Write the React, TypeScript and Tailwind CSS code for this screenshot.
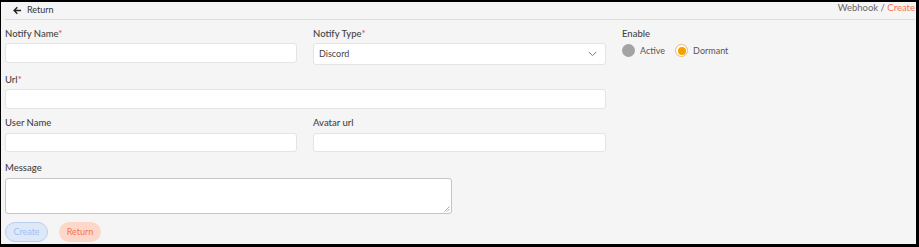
import React from "react";

const Label = ({ text, req }: { text: string; req?: boolean }) => (
  <div className="h-[12px] leading-[12px] text-[9.5px] text-[#444] font-medium">
    {text}
    {req && <span className="text-[#e8404a]">*</span>}
  </div>
);

const Input = ({ w, h = "h-[20px]" }: { w: string; h?: string }) => (
  <div className={`${w} ${h} bg-white border border-[#e4e4e4] rounded-[3px]`} />
);

export default function App() {
  return (
    <div
      className="w-[919px] h-[247px] bg-[#f5f5f5] border-t-2 border-l border-r-[3px] border-b-[3px] border-black flex flex-col pl-[4px] pr-[1px] overflow-hidden"
      style={{ fontFamily: "Lato, 'Open Sans', sans-serif" }}
    >
      <div className="h-[18px] shrink-0 flex items-center justify-between border-b border-[#dcdcdc]">
        <div className="flex items-center pl-[8px] text-[9px] text-[#333] -mt-[1px]">
          <svg width="9" height="9" viewBox="0 0 10 10" className="mr-[5px]">
            <path d="M9 5H1.5M4.8 1.5L1.3 5l3.5 3.5" stroke="#222" strokeWidth="1.6" fill="none" />
          </svg>
          Return
        </div>
        <div className="text-[9.5px] text-[#666] -mt-[4px]">
          Webhook / <span className="text-[#f7764f]">Create</span>
        </div>
      </div>

      <div className="flex mt-[8px]">
        <div className="w-[292px] flex flex-col">
          <Label text="Notify Name" req />
          <div className="mt-[3px]">
            <Input w="w-[292px]" />
          </div>
        </div>
        <div className="w-[293px] ml-[16px] flex flex-col">
          <Label text="Notify Type" req />
          <div className="mt-[3px] w-[293px] h-[22px] bg-white border border-[#e4e4e4] rounded-[3px] flex items-center justify-between pl-[5px] pr-[8px]">
            <span className="text-[9px] text-[#444]">Discord</span>
            <svg width="9" height="6" viewBox="0 0 9 6">
              <path d="M0.8 1l3.7 3.6L8.2 1" stroke="#777" strokeWidth="1" fill="none" />
            </svg>
          </div>
        </div>
        <div className="ml-[16px] flex flex-col">
          <Label text="Enable" />
          <div className="mt-[4px] flex items-center h-[13px] text-[9px] text-[#555]">
            <span className="w-[13px] h-[13px] rounded-full bg-[#a3a3a3] inline-block" />
            <span className="ml-[5px]">Active</span>
            <span className="ml-[10px] w-[13px] h-[13px] rounded-full border border-[#f7b84a] bg-white flex items-center justify-center">
              <span className="w-[8px] h-[8px] rounded-full bg-[#f5a200]" />
            </span>
            <span className="ml-[5px]">Dormant</span>
          </div>
        </div>
      </div>

      <div className="mt-[9px] flex flex-col">
        <Label text="Url" req />
        <div className="mt-[3px]">
          <Input w="w-[601px]" />
        </div>
      </div>

      <div className="mt-[8px] flex">
        <div className="w-[292px] flex flex-col">
          <Label text="User Name" />
          <div className="mt-[4px]">
            <Input w="w-[292px]" h="h-[19px]" />
          </div>
        </div>
        <div className="w-[293px] ml-[16px] flex flex-col">
          <Label text="Avatar url" />
          <div className="mt-[4px]">
            <Input w="w-[293px]" h="h-[19px]" />
          </div>
        </div>
      </div>

      <div className="mt-[10px] flex flex-col">
        <Label text="Message" />
        <div className="mt-[4px] relative w-[447px] h-[36px] bg-white border border-[#c4c4c4] rounded-[3px]">
          <svg width="6" height="6" viewBox="0 0 6 6" className="absolute right-[1px] bottom-[1px]">
            <path d="M5.5 0.5L0.5 5.5M5.5 3L3 5.5" stroke="#999" strokeWidth="0.8" />
          </svg>
        </div>
      </div>

      <div className="mt-[8px] flex items-center">
        <div className="w-[43px] h-[20px] rounded-full border border-[#b8cff1] bg-[#dde8f8] flex items-center justify-center text-[9px] text-[#a3c0ef]">
          Create
        </div>
        <div className="ml-[11px] w-[42px] h-[20px] rounded-full bg-[#fdd8ca] flex items-center justify-center text-[9px] text-[#f5734f]">
          Return
        </div>
      </div>
    </div>
  );
}
